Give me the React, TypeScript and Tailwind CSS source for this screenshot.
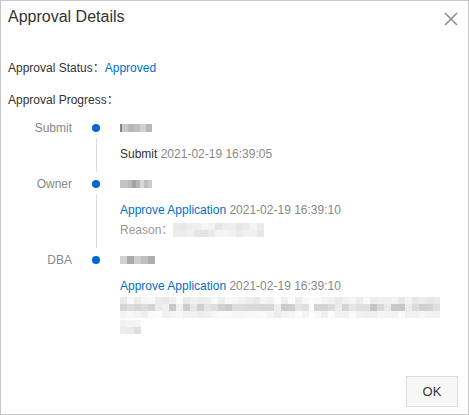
import React from 'react';

const font = { fontFamily: '"Liberation Sans", Arial, "Noto Sans CJK SC", sans-serif' };

// deterministic noise for the blurred (pixelated) parts
const noise = (seed: number, i: number) => {
  const x = Math.sin(seed * 91.7 + i * 12.9898) * 43758.5453;
  return x - Math.floor(x);
};

type MosaicProps = {
  cols: number;
  rows: [number, number][];
  seed: number;
  cw?: number;
  ch?: number;
};

const Mosaic = ({ cols, rows, seed, cw = 7, ch = 7 }: MosaicProps) => (
  <div className="flex flex-col">
    {rows.map(([min, max], r) => (
      <div key={r} className="flex">
        {Array.from({ length: cols }).map((_, c) => {
          const g = Math.round(min + noise(seed + r, c) * (max - min));
          return <span key={c} style={{ width: cw, height: ch, background: `rgb(${g},${g},${g})` }} />;
        })}
      </div>
    ))}
  </div>
);

const Dot = () => <span className="w-[8px] h-[8px] rounded-full bg-[#0068d0]" />;

type Step = {
  label: string;
  name: React.ReactNode;
  details: React.ReactNode;
  last?: boolean;
};

const TimelineItem = ({ label, name, details, last }: Step) => (
  <div className="flex">
    <div className="w-[64px] text-right text-[#888] h-[20px] leading-[20px]">{label}</div>
    <div className="w-[48px] flex flex-col items-center">
      <div className="h-[20px] flex items-center">
        <Dot />
      </div>
      {!last && <div className="flex-1 w-px bg-[#dcdcdc] mb-[2px]" />}
    </div>
    <div className={last ? 'flex-1' : 'flex-1 pb-[10px]'}>
      <div className="h-[20px] flex items-center">{name}</div>
      <div className="mt-[6px]">{details}</div>
    </div>
  </div>
);

export default function App() {
  return (
    <div
      className="w-[469px] h-[415px] border border-[#c6c6c6] bg-white flex flex-col text-[12px] text-[#333]"
      style={font}
    >
      {/* header */}
      <div className="flex justify-between items-start pl-[7px] pr-[10px] pt-[6px]">
        <h2 className="text-[16px] leading-[20px] text-[#333]">Approval Details</h2>
        <button className="mt-[5px] w-[14px] h-[14px] text-[#8c8c8c]">
          <svg width="14" height="14" viewBox="0 0 14 14" fill="none" stroke="currentColor" strokeWidth="1.5">
            <path d="M1 1L13 13M13 1L1 13" />
          </svg>
        </button>
      </div>

      {/* body */}
      <div className="flex-1 pl-[7px] pt-[31px]">
        <div className="h-[20px] leading-[20px]">
          Approval Status：<span className="text-[#0070cc]">Approved</span>
        </div>
        <div className="h-[20px] leading-[20px] mt-[12px]">Approval Progress：</div>

        <div className="flex flex-col mt-[8px]">
          <TimelineItem
            label="Submit"
            name={
              <div className="flex items-center">
                <span className="w-[2px] h-[8px] bg-[#888]" />
                <Mosaic cols={5} rows={[[180, 210]]} ch={8} cw={6} seed={3} />
              </div>
            }
            details={
              <div className="h-[20px] leading-[20px]">
                Submit <span className="text-[#888]">2021-02-19 16:39:05</span>
              </div>
            }
          />
          <TimelineItem
            label="Owner"
            name={<Mosaic cols={8} rows={[[160, 220]]} ch={8} cw={4} seed={11} />}
            details={
              <>
                <div className="h-[20px] leading-[20px]">
                  <span className="text-[#0070cc]">Approve Application</span>{' '}
                  <span className="text-[#888]">2021-02-19 16:39:10</span>
                </div>
                <div className="h-[20px] leading-[20px] flex items-center text-[#999]">
                  Reason：
                  <Mosaic cols={13} rows={[[230, 246], [228, 246]]} seed={21} />
                </div>
              </>
            }
          />
          <TimelineItem
            last
            label="DBA"
            name={<Mosaic cols={5} rows={[[160, 210]]} ch={8} seed={31} />}
            details={
              <>
                <div className="h-[20px] leading-[20px]">
                  <span className="text-[#0070cc]">Approve Application</span>{' '}
                  <span className="text-[#888]">2021-02-19 16:39:10</span>
                </div>
                <div className="flex gap-[5px] mt-[1px]">
                  <Mosaic cols={27} rows={[[230, 253], [195, 240], [236, 253]]} seed={41} />
                  <Mosaic cols={18} rows={[[230, 253], [195, 240], [236, 253]]} seed={57} />
                </div>
                <div className="mt-[2px]">
                  <Mosaic cols={3} rows={[[220, 246], [205, 238]]} seed={71} />
                </div>
              </>
            }
          />
        </div>
      </div>

      {/* footer */}
      <div className="flex justify-end pr-[10px] pb-[7px]">
        <button className="w-[52px] h-[31px] border border-[#dcdcdc] bg-[#f7f7f7] text-[13px] text-[#333]">
          OK
        </button>
      </div>
    </div>
  );
}
